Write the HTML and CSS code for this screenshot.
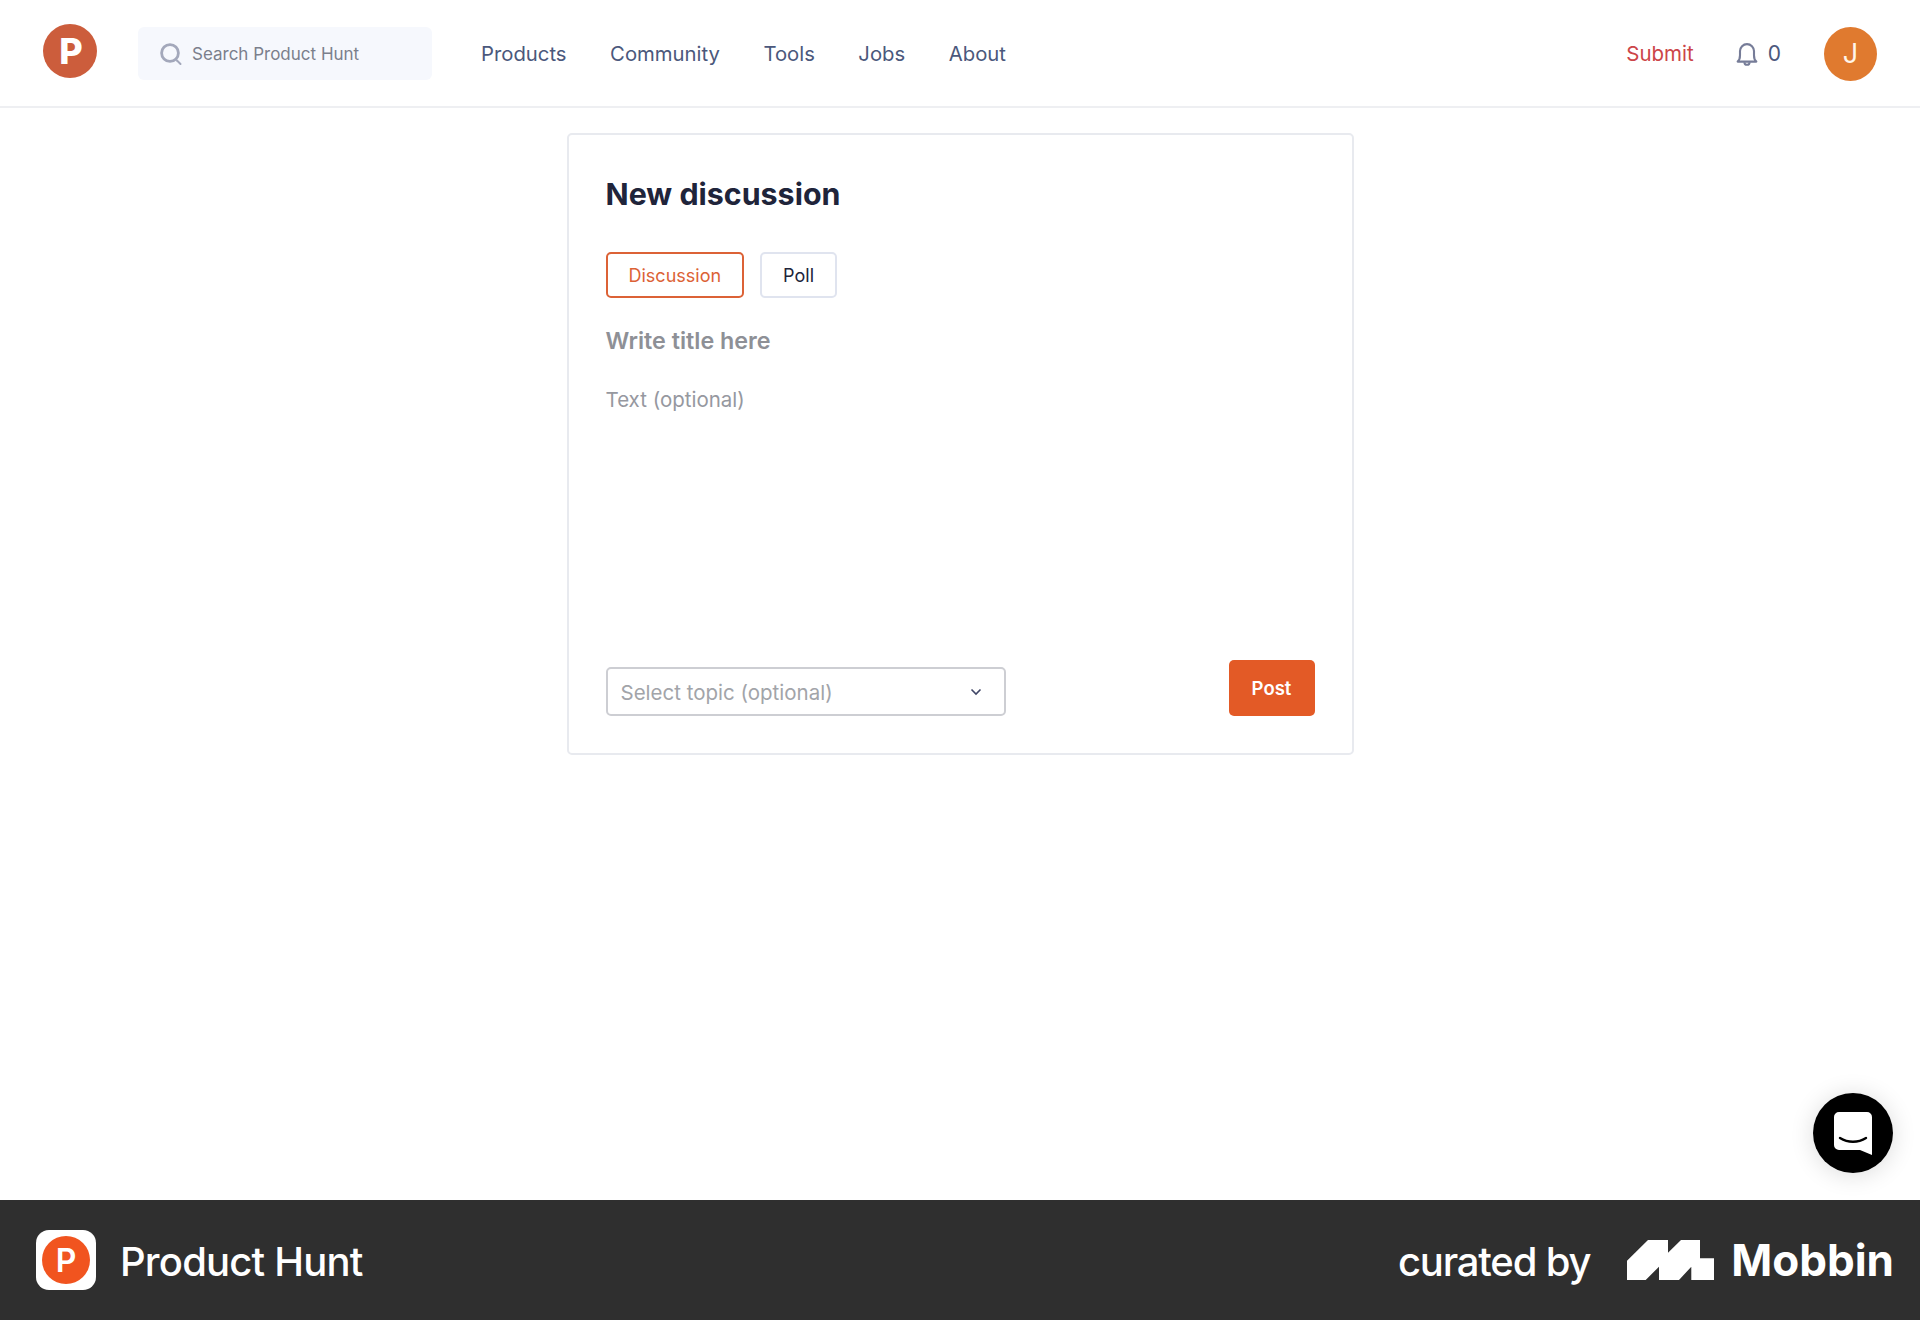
FILE: index.html
```html
<!DOCTYPE html>
<html lang="en">
  <head>
    <meta charset="UTF-8" />
    <meta name="viewport" content="width=device-width, initial-scale=1.0" />
    <title>New discussion</title>
    <link rel="stylesheet" href="styles.css">
  </head>
  <body>
    <header class="top_bar">
      <a href="#" class="logo"><span>P</span></a>
      <div class="search">
        <svg width="24" height="24" viewBox="0 0 24 24" fill="none" stroke="#a3a8bb" stroke-width="2.8">
          <circle cx="11" cy="11" r="8.4" />
          <path d="M18 18.5l3.5 3.5" stroke-width="2" stroke-linecap="round" />
        </svg>
        <span>Search Product Hunt</span>
      </div>
      <nav class="top_menu">
        <a href="#">Products</a>
        <a href="#">Community</a>
        <a href="#">Tools</a>
        <a href="#">Jobs</a>
        <a href="#">About</a>
      </nav>
      <a href="#" class="submit">Submit</a>
      <div class="notif">
        <svg width="28" height="28" viewBox="0 0 24 24" fill="none" stroke="#767c98" stroke-width="1.8" stroke-linejoin="round">
          <path d="M4 18.5c1.600-1.400 2-3 2-5.500V9.500a6 6 0 0 1 12 0V13c0 2.500.4 4.100 2 5.500z" />
          <path d="M9.800 19a2.200 2.200 0 0 0 4.400 0" />
        </svg>
        <span>0</span>
      </div>
      <div class="avatar">J</div>
    </header>
    <main class="sec_con">
      <section class="card">
        <h1>New discussion</h1>
        <div class="tabs">
          <button class="tab on">Discussion</button>
          <button class="tab">Poll</button>
        </div>
        <div class="title_input">Write title here</div>
        <div class="text_input">Text (optional)</div>
        <div class="card_foot">
          <div class="select">
            <span>Select topic (optional)</span>
            <svg width="12" height="8" viewBox="0 0 12 8" fill="none" stroke="#3f4566" stroke-width="1.6">
              <path d="M1.5 1.500l4.500 4.500 4.500-4.500" />
            </svg>
          </div>
          <button class="post">Post</button>
        </div>
      </section>
    </main>
    <a href="#" class="chat">
      <svg width="38" height="43" viewBox="0 0 38 43">
        <path d="M5 0h28a5 5 0 0 1 5 5v38l-12-5H5a5 5 0 0 1-5-5V5a5 5 0 0 1 5-5z" fill="#fff" />
        <path d="M6 26c8 5 18 5 26 0" fill="none" stroke="#000" stroke-width="2.4" stroke-linecap="round" />
      </svg>
    </a>
    <footer class="credit">
      <div class="credit_app">
        <div class="app_icon"><span>P</span></div>
        <span class="app_name">Product Hunt</span>
      </div>
      <div class="credit_by">
        <span class="curated">curated by</span>
        <svg width="87" height="40" viewBox="0 0 87 40" fill="#fff">
          <path d="M0 20.700L21 0h20v12.700L54 0h19v18.300h14V40H64.300V26.700L52 40H32V26.700L18.700 40H0z" />
        </svg>
        <span class="mobbin">Mobbin</span>
      </div>
    </footer>
  </body>
</html>
```

FILE: styles.css
```css
* {
  margin: 0;
  padding: 0;
  box-sizing: border-box;
}
body {
  display: flex;
  flex-direction: column;
  min-height: 100vh;
  font-family: Inter, "Liberation Sans", sans-serif;
  background-color: white;
  color: #20243a;
}
a {
  text-decoration: none;
}
.top_bar {
  display: flex;
  align-items: center;
  height: 108px;
  padding: 1px 43px 0 43px;
  border-bottom: 2px solid #eeeff2;
}
.logo {
  display: flex;
  justify-content: center;
  align-items: center;
  width: 54px;
  height: 54px;
  margin-bottom: 5px;
  padding-left: 2px;
  border-radius: 50%;
  background-color: #cc5d3c;
  color: white;
  font-size: 36px;
  font-weight: 800;
}
.search {
  display: flex;
  align-items: center;
  gap: 9px;
  width: 294px;
  height: 53px;
  margin-left: 41px;
  padding-left: 21px;
  border-radius: 6px;
  background-color: #f6f8fd;
  color: #7b7f8c;
  font-size: 17px;
}
.top_menu {
  display: flex;
  gap: 43.5px;
  margin-left: 49px;
  margin-right: auto;
}
.top_menu a {
  color: #4b587c;
  font-size: 20.3px;
}
.submit {
  color: #cc4548;
  font-size: 20.5px;
}
.notif {
  display: flex;
  align-items: center;
  gap: 7px;
  margin-left: 39px;
  color: #4b587c;
  font-size: 21px;
}
.avatar {
  display: flex;
  justify-content: center;
  align-items: center;
  width: 53px;
  height: 54px;
  margin-left: 43px;
  border-radius: 50%;
  background-color: #e07a2f;
  color: #fff5ea;
  font-size: 27px;
}
.sec_con {
  flex: 1;
  display: flex;
  justify-content: center;
  padding-top: 25px;
}
.card {
  display: flex;
  flex-direction: column;
  width: 787px;
  height: 622px;
  padding: 39px 37px 37px 37px;
  border: 2px solid #e8eaef;
  border-radius: 5px;
}
.card h1 {
  font-size: 30.4px;
  line-height: 40px;
  font-weight: 700;
  color: #20243a;
}
.tabs {
  display: flex;
  gap: 16px;
  margin-top: 38px;
}
.tab {
  height: 46px;
  padding: 0 21px;
  border: 2px solid #e0e4ef;
  border-radius: 5px;
  background-color: white;
  color: #20243a;
  font-family: inherit;
  font-size: 18px;
}
.tab.on {
  border-color: #dc6236;
  color: #dc6236;
}
.title_input {
  margin-top: 28px;
  font-size: 23.3px;
  line-height: 30px;
  font-weight: 600;
  color: #8e9096;
}
.text_input {
  margin-top: 30px;
  font-size: 20.5px;
  line-height: 28px;
  color: #96989f;
}
.card_foot {
  display: flex;
  justify-content: space-between;
  align-items: flex-end;
  margin-top: auto;
}
.select {
  display: flex;
  justify-content: space-between;
  align-items: center;
  width: 400px;
  height: 49px;
  padding: 1px 22px 0 13px;
  border: 2px solid #cdced3;
  border-radius: 5px;
  color: #a2a4a9;
  font-size: 20.5px;
}
.post {
  width: 86px;
  height: 56px;
  border: none;
  border-radius: 5px;
  background-color: #e35a26;
  color: white;
  font-family: inherit;
  font-size: 18.5px;
  font-weight: 600;
}
.chat {
  position: fixed;
  right: 27px;
  bottom: 147px;
  display: flex;
  justify-content: center;
  align-items: center;
  width: 80px;
  height: 80px;
  border-radius: 50%;
  background-color: black;
  box-shadow: 0 2px 24px rgba(0, 0, 0, 0.14);
}
.credit {
  display: flex;
  justify-content: space-between;
  align-items: center;
  height: 120px;
  padding: 0 26px 0 36px;
  background-color: #2f2f2f;
  color: white;
}
.credit_app {
  display: flex;
  align-items: center;
  gap: 24px;
}
.app_name {
  padding-top: 2px;
  font-size: 40px;
  font-weight: 500;
  letter-spacing: -0.8px;
}
.app_icon {
  display: flex;
  justify-content: center;
  align-items: center;
  width: 60px;
  height: 60px;
  border-radius: 13px;
  background-color: white;
}
.app_icon span {
  display: flex;
  justify-content: center;
  align-items: center;
  width: 48px;
  height: 48px;
  border-radius: 50%;
  background-color: #f1541f;
  font-size: 32px;
  font-weight: 600;
}
.credit_by {
  display: flex;
  align-items: center;
}
.curated {
  padding-top: 3px;
  font-size: 40px;
  font-weight: 500;
  letter-spacing: -1.2px;
}
.credit_by svg {
  margin-left: 37px;
}
.mobbin {
  margin-left: 17px;
  font-size: 44px;
  font-weight: 700;
}
```
